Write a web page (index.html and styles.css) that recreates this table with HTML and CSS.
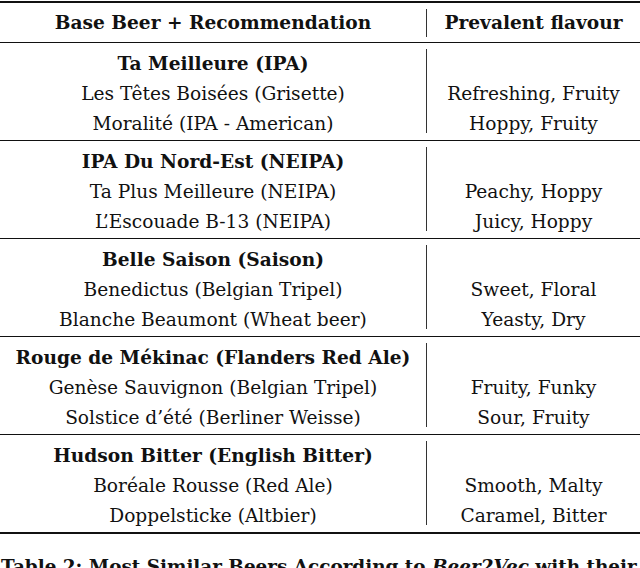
FILE: index.html
```html
<!DOCTYPE html>
<html>
<head>
<meta charset="utf-8">
<link rel="stylesheet" href="styles.css">
</head>
<body>
<div class="table">
  <div class="rule thick"></div>
  <div class="row head">
    <div class="c1"><div class="line b">Base Beer + Recommendation</div></div>
    <div class="c2"><div class="line b">Prevalent flavour</div></div>
  </div>
  <div class="rule"></div>
  <div class="row group">
    <div class="c1"><div class="line b">Ta Meilleure (IPA)</div><div class="line">Les Têtes Boisées (Grisette)</div><div class="line">Moralité (IPA - American)</div></div>
    <div class="c2"><div class="line"></div><div class="line">Refreshing, Fruity</div><div class="line">Hoppy, Fruity</div></div>
  </div>
  <div class="rule"></div>
  <div class="row group">
    <div class="c1"><div class="line b">IPA Du Nord-Est (NEIPA)</div><div class="line">Ta Plus Meilleure (NEIPA)</div><div class="line">L’Escouade B-13 (NEIPA)</div></div>
    <div class="c2"><div class="line"></div><div class="line">Peachy, Hoppy</div><div class="line">Juicy, Hoppy</div></div>
  </div>
  <div class="rule"></div>
  <div class="row group">
    <div class="c1"><div class="line b">Belle Saison (Saison)</div><div class="line">Benedictus (Belgian Tripel)</div><div class="line">Blanche Beaumont (Wheat beer)</div></div>
    <div class="c2"><div class="line"></div><div class="line">Sweet, Floral</div><div class="line">Yeasty, Dry</div></div>
  </div>
  <div class="rule"></div>
  <div class="row group">
    <div class="c1"><div class="line b">Rouge de Mékinac (Flanders Red Ale)</div><div class="line">Genèse Sauvignon (Belgian Tripel)</div><div class="line">Solstice d’été (Berliner Weisse)</div></div>
    <div class="c2"><div class="line"></div><div class="line">Fruity, Funky</div><div class="line">Sour, Fruity</div></div>
  </div>
  <div class="rule"></div>
  <div class="row group">
    <div class="c1"><div class="line b">Hudson Bitter (English Bitter)</div><div class="line">Boréale Rousse (Red Ale)</div><div class="line">Doppelsticke (Altbier)</div></div>
    <div class="c2"><div class="line"></div><div class="line">Smooth, Malty</div><div class="line">Caramel, Bitter</div></div>
  </div>
  <div class="rule thick"></div>
</div>
<p class="caption">Table 2: Most Similar Beers According to <i>Beer2Vec</i> with their</p>
</body>
</html>
```
FILE: styles.css
```css
html, body {
  margin: 0;
  padding: 0;
  background: #fff;
}
body {
  width: 640px;
  height: 568px;
  overflow: hidden;
  font-family: "DejaVu Serif", "Liberation Serif", serif;
  font-size: 18.6px;
  color: #111;
}
.table {
  padding-top: 1px;
}
.rule {
  height: 1px;
  background: #111;
}
.rule.thick {
  height: 2px;
}
.row {
  display: grid;
  grid-template-columns: 426px 1px 213px;
}
.row.head {
  padding: 6px 0 5px;
}
.row.head .c1,
.row.head .c2 {
  height: 28px;
}
.row.head .line {
  line-height: 28px;
  height: 28px;
}
.row.group {
  padding: 6px 0 7px;
}
.row.group .c1,
.row.group .c2 {
  height: 84px;
}
.c1 {
  grid-column: 1;
  text-align: center;
}
.c2 {
  grid-column: 2 / 4;
  border-left: 1px solid #333;
  text-align: center;
}
.line {
  height: 30px;
  line-height: 30px;
  white-space: nowrap;
}
.b {
  font-weight: bold;
}
.caption {
  margin: 19px 0 0 1px;
  font-size: 18.4px;
  font-weight: bold;
  white-space: nowrap;
  line-height: 28px;
}
```
